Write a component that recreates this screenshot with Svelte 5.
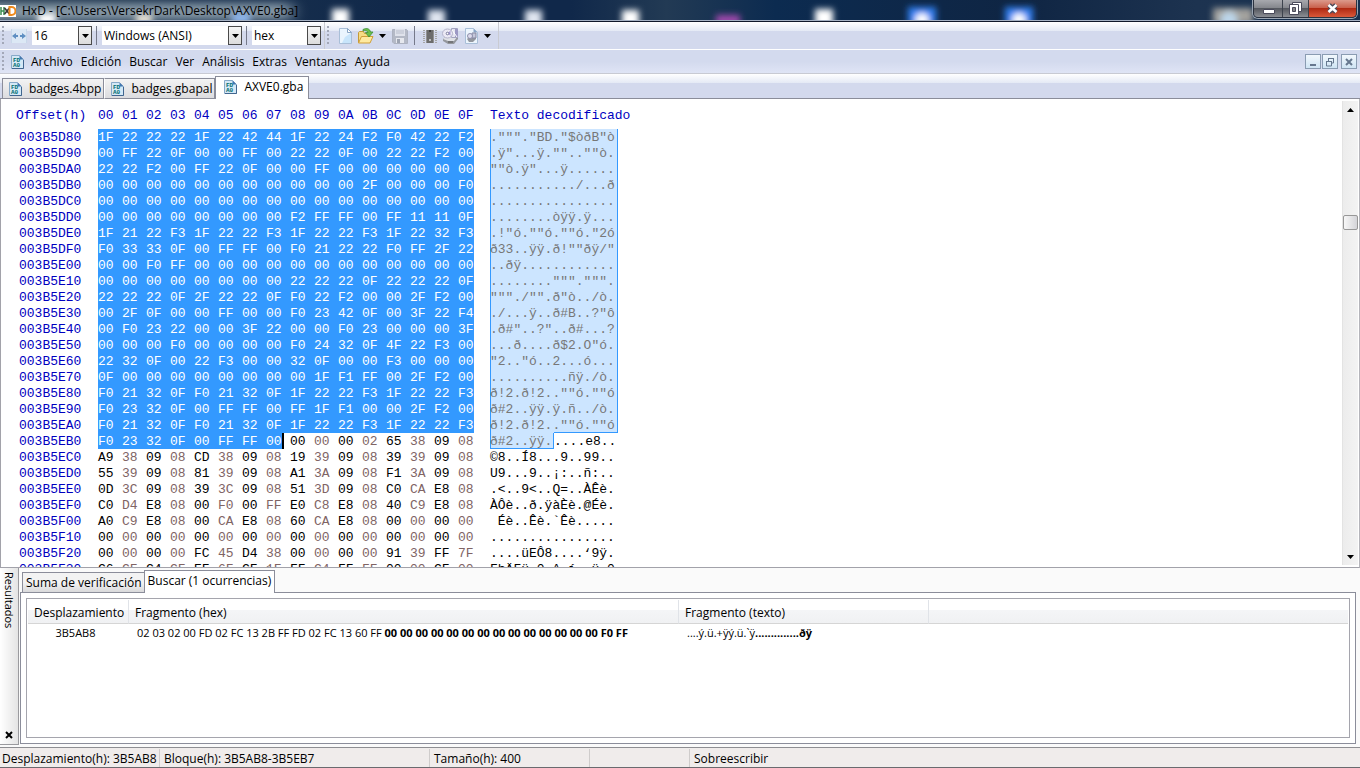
<script lang="ts">
  const menus = ['Archivo', 'Edición', 'Buscar', 'Ver', 'Análisis', 'Extras', 'Ventanas', 'Ayuda'];
  const files = ['badges.4bpp', 'badges.gbapal', 'AXVE0.gba'];
  const columns = Array.from({ length: 16 }, (_, i) => i.toString(16).toUpperCase().padStart(2, '0'));

  let activeFile = $state(2);
  let activeResult = $state(1);

  const base = 0x3b5d80;
  const selEnd = 0x3b5eb7;

  const dump: [string, string][] = [
    ['1F 22 22 22 1F 22 42 44 1F 22 24 F2 F0 42 22 F2', '."""."BD."$òðB"ò'],
    ['00 FF 22 0F 00 00 FF 00 22 22 0F 00 22 22 F2 00', '.ÿ"...ÿ.""..""ò.'],
    ['22 22 F2 00 FF 22 0F 00 00 FF 00 00 00 00 00 00', '""ò.ÿ"...ÿ......'],
    ['00 00 00 00 00 00 00 00 00 00 00 2F 00 00 00 F0', '.........../...ð'],
    ['00 00 00 00 00 00 00 00 00 00 00 00 00 00 00 00', '................'],
    ['00 00 00 00 00 00 00 00 F2 FF FF 00 FF 11 11 0F', '........òÿÿ.ÿ...'],
    ['1F 21 22 F3 1F 22 22 F3 1F 22 22 F3 1F 22 32 F3', '.!"ó.""ó.""ó."2ó'],
    ['F0 33 33 0F 00 FF FF 00 F0 21 22 22 F0 FF 2F 22', 'ð33..ÿÿ.ð!""ðÿ/"'],
    ['00 00 F0 FF 00 00 00 00 00 00 00 00 00 00 00 00', '..ðÿ............'],
    ['00 00 00 00 00 00 00 00 22 22 22 0F 22 22 22 0F', '........""".""".'],
    ['22 22 22 0F 2F 22 22 0F F0 22 F2 00 00 2F F2 00', '"""./"".ð"ò../ò.'],
    ['00 2F 0F 00 00 FF 00 00 F0 23 42 0F 00 3F 22 F4', './...ÿ..ð#B..?"ô'],
    ['00 F0 23 22 00 00 3F 22 00 00 F0 23 00 00 00 3F', '.ð#"..?"..ð#...?'],
    ['00 00 00 F0 00 00 00 00 F0 24 32 0F 4F 22 F3 00', '...ð....ð$2.O"ó.'],
    ['22 32 0F 00 22 F3 00 00 32 0F 00 00 F3 00 00 00', '"2.."ó..2...ó...'],
    ['0F 00 00 00 00 00 00 00 00 1F F1 FF 00 2F F2 00', '..........ñÿ./ò.'],
    ['F0 21 32 0F F0 21 32 0F 1F 22 22 F3 1F 22 22 F3', 'ð!2.ð!2..""ó.""ó'],
    ['F0 23 32 0F 00 FF FF 00 FF 1F F1 00 00 2F F2 00', 'ð#2..ÿÿ.ÿ.ñ../ò.'],
    ['F0 21 32 0F F0 21 32 0F 1F 22 22 F3 1F 22 22 F3', 'ð!2.ð!2..""ó.""ó'],
    ['F0 23 32 0F 00 FF FF 00 00 00 00 02 65 38 09 08', 'ð#2..ÿÿ.....e8..'],
    ['A9 38 09 08 CD 38 09 08 19 39 09 08 39 39 09 08', '©8..Í8...9..99..'],
    ['55 39 09 08 81 39 09 08 A1 3A 09 08 F1 3A 09 08', 'U9...9..¡:..ñ:..'],
    ['0D 3C 09 08 39 3C 09 08 51 3D 09 08 C0 CA E8 08', '.<..9<..Q=..ÀÊè.'],
    ['C0 D4 E8 08 00 F0 00 FF E0 C8 E8 08 40 C9 E8 08', 'ÀÔè..ð.ÿàÈè.@Éè.'],
    ['A0 C9 E8 08 00 CA E8 08 60 CA E8 08 00 00 00 00', ' Éè..Êè.`Êè.....'],
    ['00 00 00 00 00 00 00 00 00 00 00 00 00 00 00 00', '................'],
    ['00 00 00 00 FC 45 D4 38 00 00 00 00 91 39 FF 7F', '....üEÔ8....‘9ÿ.'],
    ['C6 CF C4 CF EF 6F CF 1F FF C4 FF FF 00 00 CF 00', 'FhÄFü.0.^.í..ü.0']
  ];

  const rows = dump.map(([hex, text], r) => {
    const addr = base + r * 16;
    const count = Math.max(0, Math.min(16, selEnd - addr + 1));
    return {
      offset: addr.toString(16).toUpperCase().padStart(8, '0'),
      bytes: hex.split(' '),
      count,
      picked: text.slice(0, count),
      rest: text.slice(count)
    };
  });
</script>

{#snippet fileIcon()}
  <svg class="file-icon" width="13" height="14" viewBox="0 0 13 14" aria-hidden="true">
    <path d="M.5.5h8l4 4v9H.5z" fill="#d4e8f6" stroke="#86a9c8" />
    <path d="M8.500 .5v4h4z" fill="#4677ae" />
    <path d="M12.500 5v8.500H1" fill="none" stroke="#41668f" />
    <text x="2" y="7">FD</text>
    <text x="2" y="12">A0</text>
  </svg>
{/snippet}

{#snippet combo(id: string, label: string, value: string, size: string)}
  <label class="combo {size}" for={id}>
    <select {id} aria-label={label}>
      <option>{value}</option>
    </select>
    <span class="drop">
      <svg width="7" height="4" viewBox="0 0 7 4" aria-hidden="true"><path d="M0 0h7L3.500 4z" /></svg>
    </span>
  </label>
{/snippet}

{#snippet more(label: string)}
  <button class="more" aria-label={label}>
    <svg width="7" height="4" viewBox="0 0 7 4" aria-hidden="true"><path d="M0 0h7L3.500 4z" /></svg>
  </button>
{/snippet}

<div class="window">
  <header class="titlebar">
    <svg class="glass" width="100%" height="20" aria-hidden="true">
      <defs>
        <filter id="soft" x="-50%" y="-50%" width="200%" height="200%">
          <feGaussianBlur stdDeviation="3" />
        </filter>
        <filter id="haze" x="-20%" y="-100%" width="140%" height="300%">
          <feGaussianBlur stdDeviation="8 4" />
        </filter>
      </defs>
      <rect x="-20" y="3" width="312" height="17" fill="#a9b9c3" opacity=".75" filter="url(#haze)" />
      <g filter="url(#soft)">
        <rect x="38" y="13" width="18" height="12" fill="#fff" />
        <rect x="136" y="14" width="16" height="10" fill="#e9e3d6" />
        <rect x="232" y="13" width="18" height="10" fill="#8fb8f0" />
        <rect x="332" y="9" width="17" height="18" fill="#fff" />
        <rect x="428" y="10" width="17" height="18" fill="#dfe5f0" />
        <rect x="525" y="10" width="17" height="18" fill="#dfe5f0" />
        <rect x="622" y="10" width="17" height="18" fill="#fff" />
        <rect x="716" y="15" width="24" height="10" fill="#a048ad" />
        <rect x="815" y="9" width="18" height="18" fill="#fff" />
        <rect x="1213" y="8" width="40" height="16" fill="#a3a19d" />
      </g>
      <g filter="url(#soft)">
        <rect x="908" y="7" width="28" height="18" fill="#2f7ff0" />
        <circle cx="922" cy="20" r="7" fill="#fff" />
        <rect x="1005" y="7" width="28" height="18" fill="#2f7ff0" />
        <circle cx="1019" cy="20" r="7" fill="#fff" />
        <circle cx="1229" cy="20" r="9" fill="#bcd6ea" />
      </g>
    </svg>
    <svg class="logo" width="16" height="14" viewBox="0 0 16 14" aria-hidden="true">
      <path d="M0 1h16v12H0z" fill="#fff" />
      <path d="M1 3v8M4 3v8M1 7h3" stroke="#3b8f52" stroke-width="1.500" />
      <path d="M4.500 4l5 6M9.500 4l-5 6" stroke="#3c3c3c" stroke-width="1.800" />
      <path d="M9.500 3v8h2a4 4 0 0 0 0-8z" fill="#fff" stroke="#ee8a1c" stroke-width="2" />
    </svg>
    <h1>HxD - [C:\Users\VersekrDark\Desktop\AXVE0.gba]</h1>
    <div class="win-buttons">
      <button class="min" aria-label="Minimizar">
        <svg width="13" height="13" viewBox="0 0 13 13" aria-hidden="true">
          <path d="M1.500 7.500h11v4h-11z" fill="#fff" stroke="#4a4a5a" />
        </svg>
      </button>
      <button class="restore" aria-label="Restaurar">
        <svg width="13" height="13" viewBox="0 0 13 13" aria-hidden="true">
          <path d="M3.500 .5h9v9h-9z" fill="#fff" stroke="#4a4a5a" />
          <path d="M.5 2.500h9v10h-9z" fill="#fff" stroke="#4a4a5a" />
          <path d="M3.500 5.500h3v4h-3z" fill="#888" stroke="#4a4a5a" />
        </svg>
      </button>
      <button class="close" aria-label="Cerrar">
        <svg width="13" height="13" viewBox="0 0 13 13" aria-hidden="true">
          <path d="M3 3l7 7M10 3l-7 7" stroke="#4a4a5a" stroke-width="5" />
          <path d="M2.500 3l8 7M10.500 3l-8 7" stroke="#fff" stroke-width="2.600" />
        </svg>
      </button>
    </div>
  </header>

  <div class="toolbars">
    <div class="toolbar">
      <span class="grip"></span>
      <button class="tool width" aria-label="Bytes por fila">
        <svg width="16" height="14" viewBox="0 0 16 14" aria-hidden="true">
          <path d="M0 0h16v14H0z" fill="#dce8f5" />
          <path d="M0 0v14M16 0v14" stroke="#b5c8df" />
          <path d="M1 7l4-3v2h2v2H5v2zM15 7l-4-3v2H9v2h2v2z" fill="#5f8fc2" />
        </svg>
      </button>
      {@render combo('row-bytes', 'Bytes por fila', '16', 'short')}
      <span class="sep"></span>
      {@render combo('charset', 'Juego de caracteres', 'Windows (ANSI)', 'long')}
      <span class="sep"></span>
      {@render combo('number-base', 'Base de desplazamiento', 'hex', 'mid')}
    </div>
    <div class="toolbar">
      <span class="grip"></span>
      <button class="tool" aria-label="Nuevo">
        <svg width="16" height="16" viewBox="0 0 16 16" aria-hidden="true">
          <path d="M2.500.5h8l4 4v11h-12z" fill="#eaf5fe" stroke="#a9bfd8" />
          <path d="M8 9l6-4v10H5z" fill="#c8e5fb" />
          <path d="M10.500.5v4h4z" fill="#fff" stroke="#89a6c6" />
        </svg>
      </button>
      <button class="tool" aria-label="Abrir">
        <svg width="17" height="16" viewBox="0 0 17 16" aria-hidden="true">
          <path d="M1.500 14.500V4.500l1-1h4l1 2h5v9z" fill="#f6dc84" stroke="#c59a37" />
          <path d="M1.500 15l3-6.500h11.500l-3 6.500z" fill="#ffeaa0" stroke="#cf9f38" />
          <path d="M6 1.500C10-.5 13 1 13.500 4h2.500L12 9 8.500 4.500H11C10.500 2.800 8.500 2 6 3z" fill="#6fc04b" stroke="#3b913a" stroke-width=".8" />
        </svg>
      </button>
      {@render more('Archivos recientes')}
      <button class="tool" aria-label="Guardar" disabled>
        <svg width="16" height="16" viewBox="0 0 16 16" aria-hidden="true">
          <path d="M.5 1.500h14l1 1v13H2l-1.500-1.500z" fill="#b4b9c6" stroke="#adb2c0" />
          <path d="M3 1h10v7H3z" fill="#dfe2eb" />
          <path d="M4 3h8M4 5h8" stroke="#b9becc" />
          <path d="M4 10h8v5H4z" fill="#e6e8ee" />
          <path d="M5 11h3v4H5z" fill="#9ea4b2" />
        </svg>
      </button>
      <span class="sep"></span>
      <button class="tool" aria-label="Abrir memoria principal">
        <svg width="16" height="16" viewBox="0 0 16 16" aria-hidden="true">
          <path d="M2 2v13M14 2v13" stroke="#a5a5a5" stroke-width="2" stroke-dasharray="1 1" />
          <path d="M4 2h8v13H4z" fill="#6c6c6c" />
          <path d="M4.500 2v13M11.500 2v13" stroke="#929292" />
          <path d="M7 2h2v2H7z" fill="#414141" />
          <path d="M7 11h2v2H7z" fill="#bdbdbd" />
        </svg>
      </button>
      <button class="tool" aria-label="Abrir disco">
        <svg width="17" height="16" viewBox="0 0 17 16" aria-hidden="true">
          <path d="M1 11l3-3h12v3l-4 5H6l-5-3z" fill="#94979d" />
          <path d="M1 11l3-3h12l-4 5H6z" fill="#dfe1e6" />
          <path d="M6 14h5" stroke="#555" />
          <path d="M9.500.5h6v9h-6z" fill="#e4e5f0" stroke="#a3a4c0" />
          <path d="M13 1h3v8h-3z" fill="#9c99c4" />
          <path d="M10 2l5 7" stroke="#fff" />
          <ellipse cx="5.500" cy="5.500" rx="5" ry="4.500" fill="#eceaf5" stroke="#b4b4cb" />
          <path d="M5.500 5.500l3-3v5z" fill="#a49ad1" />
          <circle cx="5.500" cy="5.500" r="1.300" fill="#fff" stroke="#77779b" />
        </svg>
      </button>
      <button class="tool" aria-label="Abrir imagen de disco">
        <svg width="16" height="16" viewBox="0 0 16 16" aria-hidden="true">
          <path d="M2.500.5h8l4 4v11h-12z" fill="#ecf5fd" stroke="#a9bfd8" />
          <path d="M10.500.5v4h4z" fill="#89a6c6" />
          <path d="M4 11l2-2h7v2l-3 3H6z" fill="#93979e" />
          <path d="M9 5h4v5H9z" fill="#c5c8da" stroke="#8587a1" />
          <circle cx="7" cy="8" r="2.500" fill="#dedcec" stroke="#8d8fab" />
        </svg>
      </button>
      {@render more('Imágenes recientes')}
    </div>
  </div>

  <nav class="menubar">
    <span class="grip"></span>
    {@render fileIcon()}
    <div class="menus">
      {#each menus as menu}
        <button>{menu}</button>
      {/each}
    </div>
    <div class="mdi">
      <button aria-label="Minimizar documento">
        <svg width="10" height="10" viewBox="0 0 10 10" aria-hidden="true"><path d="M2 8h6" /></svg>
      </button>
      <button aria-label="Restaurar documento">
        <svg width="10" height="10" viewBox="0 0 10 10" aria-hidden="true">
          <path d="M3 1.500h6M3.500 1v3M8.500 2v4H7M1 4.500h6M1.500 4v5h5V4" class="thin" />
        </svg>
      </button>
      <button aria-label="Cerrar documento">
        <svg width="10" height="10" viewBox="0 0 10 10" aria-hidden="true"><path d="M2 2l6 6M8 2L2 8" /></svg>
      </button>
    </div>
  </nav>

  <div class="file-tabs" role="tablist">
    {#each files as file, i}
      <button role="tab" class:active={i === activeFile} aria-selected={i === activeFile} onclick={() => (activeFile = i)}>
        {@render fileIcon()}
        {file}
      </button>
    {/each}
  </div>

  <main class="editor">
    <div class="view">
      <table class="hex">
        <colgroup>
          <col class="col-offset" />
          {#each columns as _}
            <col class="col-byte" />
          {/each}
          <col />
        </colgroup>
        <thead>
          <tr>
            <th>Offset(h)</th>
            {#each columns as column}
              <th>{column}</th>
            {/each}
            <th class="decoded-head">Texto decodificado</th>
          </tr>
        </thead>
        <tbody>
          {#each rows as row}
            <tr>
              <th class="offset">{row.offset}</th>
              {#each row.bytes as byte, i}
                <td
                  class="byte"
                  class:odd={i % 2 === 1}
                  class:selected={i < row.count}
                  class:end={i === row.count - 1}
                  class:caret={i === row.count - 1 && row.count < 16}
                ><span>{byte}</span></td>
              {/each}
              <td class="decoded">
                {#if row.count === 16}
                  <span class="picked whole">{row.picked}</span>
                {:else if row.count > 0}
                  <span class="picked tail">{row.picked}</span><span class="after">{row.rest}</span>
                {:else}
                  <span>{row.rest}</span>
                {/if}
              </td>
            </tr>
          {/each}
        </tbody>
      </table>
    </div>
    <div class="scrollbar">
      <button aria-label="Subir"><svg width="7" height="4" viewBox="0 0 7 4" aria-hidden="true"><path d="M0 4h7L3.500 0z" /></svg></button>
      <span class="track-before"></span>
      <span class="thumb"></span>
      <span class="track-after"></span>
      <button aria-label="Bajar"><svg width="7" height="4" viewBox="0 0 7 4" aria-hidden="true"><path d="M0 0h7L3.500 4z" /></svg></button>
    </div>
  </main>

  <section class="results">
    <aside>
      <h2>Resultados</h2>
      <button aria-label="Cerrar resultados">
        <svg width="8" height="8" viewBox="0 0 8 8" aria-hidden="true"><path d="M1 1l6 6M7 1L1 7" stroke="#000" stroke-width="2" /></svg>
      </button>
    </aside>
    <div class="result-body">
      <div class="result-tabs" role="tablist">
        {#each ['Suma de verificación', 'Buscar (1 ocurrencias)'] as tab, i}
          <button role="tab" class:active={i === activeResult} aria-selected={i === activeResult} onclick={() => (activeResult = i)}>{tab}</button>
        {/each}
      </div>
      <div class="page">
        <div class="list">
          <table>
            <colgroup>
              <col class="col-pos" />
              <col class="col-hex" />
              <col class="col-text" />
              <col />
            </colgroup>
            <thead>
              <tr>
                <th>Desplazamiento</th>
                <th>Fragmento (hex)</th>
                <th>Fragmento (texto)</th>
                <th class="filler"></th>
              </tr>
            </thead>
            <tbody>
              <tr>
                <td class="pos">3B5AB8</td>
                <td>02 03 02 00 FD 02 FC 13 2B FF FD 02 FC 13 60 FF <b>00 00 00 00 00 00 00 00 00 00 00 00 00 00 F0 FF</b></td>
                <td>....ý.ü.+ÿý.ü.`ÿ<b>..............ðÿ</b></td>
                <td></td>
              </tr>
            </tbody>
          </table>
        </div>
      </div>
    </div>
  </section>

  <footer class="status">
    <span class="s-pos">Desplazamiento(h): 3B5AB8</span>
    <span class="s-block">Bloque(h): 3B5AB8-3B5EB7</span>
    <span class="s-size">Tamaño(h): 400</span>
    <span class="s-empty"></span>
    <span class="s-mode">Sobreescribir</span>
  </footer>
</div>

<style>
  :global(body) {
    margin: 0;
  }

  .window {
    height: 100vh;
    display: flex;
    flex-direction: column;
    overflow: hidden;
    font-family: 'Open Sans', 'Noto Sans', sans-serif;
    font-size: 12px;
    line-height: 16px;
    color: #000;
    background: #d3d9ed;
  }

  .window * {
    box-sizing: border-box;
  }

  button,
  select {
    font: inherit;
    color: inherit;
    margin: 0;
    padding: 0;
    border: none;
    background: none;
  }

  button {
    display: flex;
    align-items: center;
    white-space: nowrap;
  }

  h1,
  h2 {
    margin: 0;
    font-size: 12px;
    font-weight: 400;
  }

  /* Title bar */
  .titlebar {
    position: relative;
    flex: none;
    display: flex;
    align-items: center;
    gap: 6px;
    height: 22px;
    border-bottom: 1px solid #10182a;
    box-shadow: inset 0 -1px #a5b1c3;
    background: linear-gradient(90deg, #223950 0, #10284a 30%, #10284a 42%, #223a54 49%, #0c2b50 57%, #0f2543 75%, #1d3350 88%, #16304f);
  }

  .glass {
    position: absolute;
    left: 0;
    top: 0;
  }

  .logo,
  .titlebar h1 {
    position: relative;
  }

  .win-buttons {
    position: relative;
    align-self: flex-start;
    display: flex;
    height: 18px;
    margin-left: auto;
    margin-right: 3px;
    border: 1px solid #2c3340;
    border-top: none;
    border-radius: 0 0 5px 5px;
    box-shadow: 0 0 0 1px #9aa5b3;
    overflow: hidden;
  }

  .win-buttons button {
    justify-content: center;
    background: linear-gradient(#a8a9ae 0, #85878d 45%, #55585f 50%, #8c8e94);
    border-right: 1px solid #3d434d;
  }

  .win-buttons .min {
    width: 29px;
  }

  .win-buttons .restore {
    width: 26px;
  }

  .win-buttons .close {
    width: 47px;
    border-right: none;
    background: linear-gradient(#dc9a8c 0, #c9614d 45%, #b02a13 50%, #d9583a);
  }

  /* Toolbars */
  .toolbars {
    flex: none;
    display: flex;
    height: 28px;
    border-bottom: 1px solid #fff;
    background: linear-gradient(#fff 0, #e4e9f5 9px, #d3d9ed 9px);
  }

  .toolbar {
    display: flex;
    align-items: center;
    height: 27px;
    padding-right: 3px;
    border-right: 1px solid #c9cbd2;
  }

  .grip {
    width: 2px;
    height: 20px;
    margin: 0 6px 0 2px;
    background: repeating-linear-gradient(#a3a8b8 0 2px, transparent 2px 4px);
  }

  .tool {
    margin: 0 2px;
  }

  .tool.width {
    margin: 0 5px 0 1px;
  }

  .sep {
    width: 1px;
    height: 19px;
    margin: 0 5px 0 4px;
    background: #75798a;
  }

  .more {
    margin: 0 4px 0 3px;
  }

  .combo {
    display: grid;
    grid-template-columns: 1fr 14px;
    height: 19px;
    background: #fff;
  }

  .combo.short {
    width: 60px;
  }

  .combo.long {
    width: 140px;
  }

  .combo.mid {
    width: 69px;
  }

  .combo select {
    grid-area: 1 / 1 / 2 / 3;
    appearance: none;
    padding-left: 2px;
    height: 19px;
  }

  .drop {
    grid-area: 1 / 2;
    display: grid;
    place-items: center;
    border: 1px solid #4a4a4a;
    background: linear-gradient(#f6f6f6, #dcdcdc);
    pointer-events: none;
  }

  /* Menu */
  .menubar {
    flex: none;
    display: flex;
    align-items: center;
    height: 24px;
    border-bottom: 1px solid #c8cad3;
    background: linear-gradient(#d3daee 50%, #dfe4f5);
  }

  .file-icon text {
    font: bold 6px 'Liberation Mono', monospace;
    fill: #006e70;
  }

  .menubar .file-icon {
    margin: 0 7px 0 1px;
  }

  .menus {
    display: flex;
    gap: 8px;
  }

  .mdi {
    display: flex;
    gap: 1px;
    margin-left: auto;
    margin-right: 3px;
  }

  .mdi button {
    justify-content: center;
    width: 16px;
    height: 15px;
    border: 1px solid #8a9cb2;
    background: linear-gradient(#f2f8fd, #cfe4f4);
  }

  .mdi button:last-child {
    margin-left: 2px;
  }

  .mdi path {
    fill: none;
    stroke: #66788f;
    stroke-width: 2;
  }

  .mdi .thin {
    stroke-width: 1;
  }

  /* Document tabs */
  .file-tabs {
    flex: none;
    display: flex;
    align-items: flex-end;
    height: 25px;
    padding-left: 2px;
    box-shadow: inset 0 -1px #8b8d9a;
    background: linear-gradient(#fff 0, #e4e9f5 9px, #d3d9ed 9px);
  }

  .file-tabs button {
    gap: 7px;
    height: 21px;
    padding: 0 2px 0 6px;
    border: 1px solid #8b8d9a;
    background: linear-gradient(#f3f3f3, #dcdcdf);
  }

  .file-tabs button + button {
    border-left-color: #fff;
  }

  .file-tabs .active,
  .file-tabs button + .active {
    height: 23px;
    padding: 0 5px 2px 8px;
    border-color: #8b8d9a;
    border-bottom: none;
    background: #fff;
  }

  /* Hex view */
  .editor {
    flex: 1;
    min-height: 0;
    display: flex;
    border-left: 1px solid #a2a2aa;
    border-right: 1px solid #b5b5bb;
    border-bottom: 1px solid #a2a2aa;
    background: #fff;
  }

  .view {
    flex: 1;
    padding: 0 0 0 15px;
    overflow: hidden;
  }

  .hex {
    width: 100%;
    table-layout: fixed;
    border-collapse: separate;
    border-spacing: 0;
    font-family: 'Liberation Mono', monospace;
    font-size: 13px;
    line-height: 16px;
  }

  .col-offset {
    width: 82px;
  }

  .col-byte {
    width: 24px;
  }

  .hex th,
  .hex td {
    height: 16px;
    padding: 0;
    font-weight: 400;
    text-align: left;
    white-space: pre;
  }

  .hex th {
    color: #0000bf;
  }

  .hex thead th {
    height: 30px;
    padding-top: 3px;
  }

  .hex .offset {
    padding: 2px 0 0 3px;
    line-height: 14px;
  }

  .hex .byte {
    padding-right: 8px;
  }

  .hex td span {
    display: block;
    height: 16px;
    line-height: 18px;
    white-space: pre;
  }

  .odd {
    color: #806464;
  }

  .hex .selected {
    background: #3399ff;
    color: #fff;
  }

  .hex .end {
    background-clip: content-box;
  }

  .caret {
    position: relative;
  }

  .caret::after {
    content: '';
    position: absolute;
    left: 16px;
    top: 0;
    width: 2px;
    height: 16px;
    background: #000;
  }

  .hex .decoded,
  .hex .decoded-head {
    padding-left: 8px;
  }

  .hex .decoded {
    white-space: normal;
  }

  .picked {
    background: #cce5ff;
    color: #777;
  }

  .whole {
    width: 128px;
    box-shadow: inset 1px 0 #3399ff, inset -1px 0 #3399ff;
  }

  .tail {
    float: left;
    width: 64px;
    box-shadow: inset 1px -1px #3399ff, inset -1px 0 #3399ff;
  }

  .after {
    width: 64px;
    margin-left: 64px;
    box-shadow: 0 -1px #3399ff;
  }

  .scrollbar {
    display: flex;
    flex-direction: column;
    width: 16px;
    margin: 2px 1px;
    border-left: 1px solid #e3e3e3;
    background: linear-gradient(90deg, #ececec, #f3f3f3);
  }

  .scrollbar button {
    justify-content: center;
    height: 17px;
  }

  .track-before {
    flex: 97;
  }

  .thumb {
    height: 15px;
    border: 1px solid #979797;
    border-radius: 2px;
    background: linear-gradient(90deg, #f7f7f7, #d4d4d8);
  }

  .track-after {
    flex: 319;
  }

  /* Results */
  .results {
    flex: none;
    display: flex;
    height: 180px;
    background: #fafafa;
    border-bottom: 1px solid #8e8e92;
  }

  aside {
    display: flex;
    flex-direction: column;
    justify-content: space-between;
    align-items: center;
    width: 19px;
    margin-bottom: 2px;
    padding: 4px 0 5px;
    border-right: 1px solid #9a9a9e;
    border-bottom: 1px solid #9a9a9e;
    background: linear-gradient(90deg, #fff, #e4e4e4);
  }

  aside h2 {
    font-size: 11px;
    writing-mode: vertical-rl;
  }

  .result-body {
    flex: 1;
    display: flex;
    flex-direction: column;
    padding: 2px 4px 3px 1px;
  }

  .result-tabs {
    position: relative;
    display: flex;
    align-items: flex-end;
    height: 23px;
    padding-left: 2px;
  }

  .result-tabs button {
    height: 21px;
    padding: 0 2px 0 3px;
    border: 1px solid #8b8d9a;
    border-right: none;
    background: linear-gradient(#f3f3f3 50%, #d9d9db);
  }

  .result-tabs .active {
    height: 23px;
    padding: 0 3px 2px;
    border-right: 1px solid #8b8d9a;
    border-bottom: none;
    background: #fff;
  }

  .page {
    flex: 1;
    margin-top: -1px;
    padding: 5px;
    border: 1px solid #8b8d9a;
    background: #fff;
  }

  .list {
    height: 100%;
    padding: 1px;
    border: 1px solid #a5a5ad;
  }

  .list table {
    width: 100%;
    table-layout: fixed;
    border-collapse: separate;
    border-spacing: 0;
  }

  .col-pos {
    width: 101px;
  }

  .col-hex {
    width: 550px;
  }

  .col-text {
    width: 250px;
  }

  .list th {
    height: 24px;
    padding: 2px 6px 0;
    font-weight: 400;
    text-align: left;
    border-right: 1px solid #e0e3e8;
    border-bottom: 1px solid #d5d5d5;
    background: linear-gradient(#fff 45%, #f4f5f7 45%, #f0f1f3);
  }

  .list .filler {
    border-right: none;
  }

  .list td {
    height: 18px;
    padding: 0 8px;
    font-size: 11px;
    white-space: nowrap;
  }

  .list .pos {
    padding-right: 14px;
    text-align: center;
  }

  /* Status bar */
  .status {
    flex: none;
    display: flex;
    height: 20px;
    padding-top: 1px;
    border-bottom: 1px solid #6a6a6e;
    background: #f0eceb;
  }

  .status span {
    padding: 2px 2px 0 4px;
    border-right: 1px solid #cfcccb;
    white-space: nowrap;
  }

  .status .s-pos {
    width: 160px;
    padding-left: 2px;
  }

  .s-block {
    width: 270px;
  }

  .s-size {
    width: 160px;
  }

  .s-empty {
    width: 100px;
  }

  .status .s-mode {
    flex: 1;
    border-right: none;
  }
</style>
